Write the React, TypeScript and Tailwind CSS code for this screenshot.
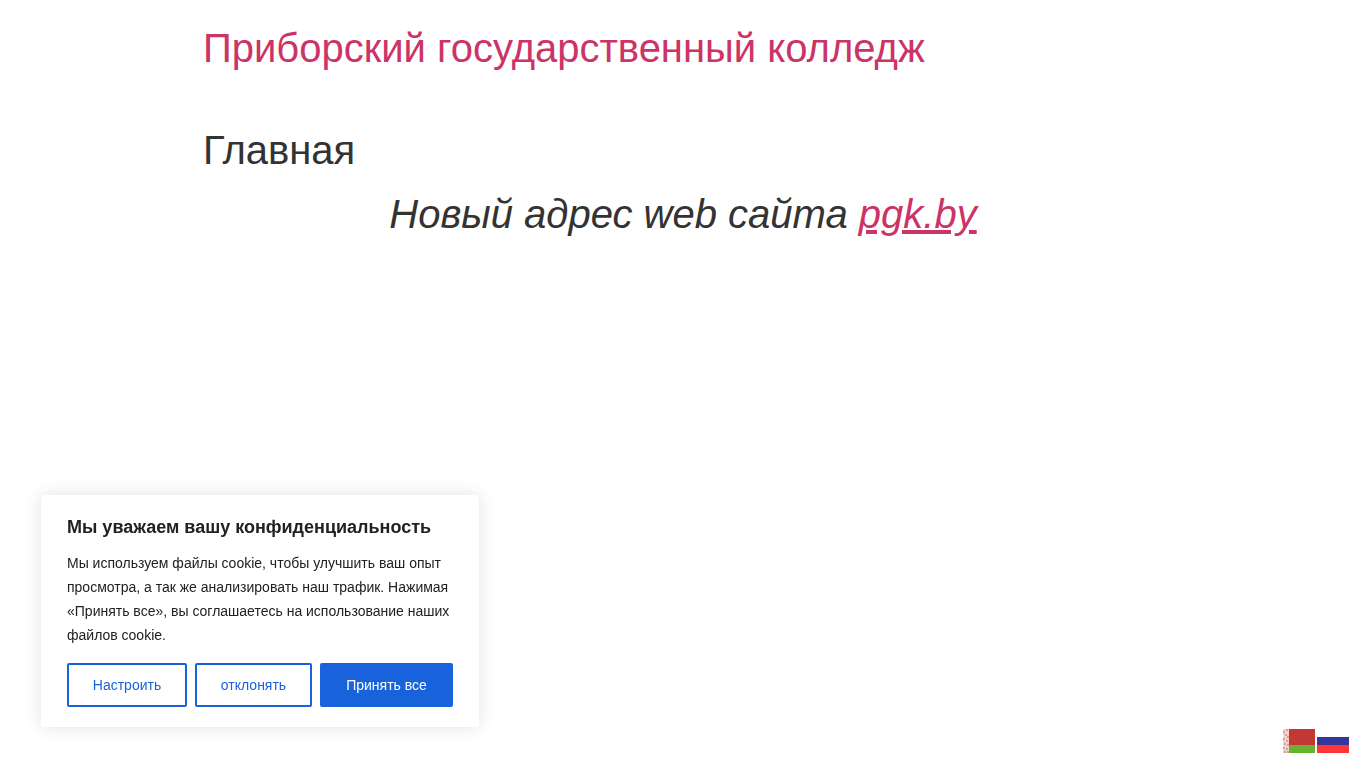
export default function App() {
  return (
    <div className="min-h-[768px] bg-white font-['Liberation_Sans',Arial,sans-serif] text-[#333]">
      <main className="mx-auto w-[960px]">
        <h1 className="pt-[26px] text-[40px] leading-[44px] font-normal text-[#cc3366]">Приборский государственный колледж</h1>
        <h2 className="mt-[58px] text-[40px] leading-[44px] font-normal text-[#333]">Главная</h2>
        <p className="mt-[20px] text-center text-[40px] leading-[44px] italic">
          Новый адрес web сайта <a href="#" className="text-[#cc3366] underline">pgk.by</a>
        </p>
      </main>

      <section className="fixed bottom-[41px] left-[41px] w-[438px] rounded-[4px] bg-white px-[26px] pt-[20px] pb-[20px] shadow-[0_0_18px_rgba(0,0,0,0.12)]">
        <h3 className="text-[18px] leading-[24px] font-bold text-[#212121]">Мы уважаем вашу конфиденциальность</h3>
        <p className="mt-[12px] text-[14px] leading-[24px] text-[#212121]">
          Мы используем файлы cookie, чтобы улучшить ваш опыт просмотра, а так же анализировать наш трафик. Нажимая «Принять все», вы соглашаетесь на использование наших файлов cookie.
        </p>
        <div className="mt-[16px] flex gap-[8px]">
          <button className="h-[44px] w-[120px] rounded-[2px] border-2 border-[#1863dc] bg-white text-[14px] text-[#1863dc]">Настроить</button>
          <button className="h-[44px] w-[117px] rounded-[2px] border-2 border-[#1863dc] bg-white text-[14px] text-[#1863dc]">отклонять</button>
          <button className="h-[44px] w-[133px] rounded-[2px] border-2 border-[#1863dc] bg-[#1863dc] text-[14px] text-white">Принять все</button>
        </div>
      </section>

      <div className="fixed right-[17px] bottom-[15px] flex gap-[2px]">
        <svg width="32" height="24" viewBox="0 0 32 24" aria-label="Беларусь">
          <rect width="32" height="16" fill="#c33734" />
          <rect y="16" width="32" height="8" fill="#67b32f" />
          <rect width="6" height="24" fill="#f5d3d1" />
          <path d="M0 2h2v2H0zM3 0h2v2H3zM2 5h2v2H2zM4 7h2v2H4zM0 9h2v2H0zM3 11h2v2H3zM1 14h2v2H1zM4 15h2v2H4zM0 18h2v2H0zM3 19h2v2H3zM1 22h2v2H1zM4 22h2v2H4z" fill="#e59a97" />
        </svg>
        <svg width="32" height="24" viewBox="0 0 32 24" aria-label="Россия">
          <rect width="32" height="8" fill="#ffffff" />
          <rect y="8" width="32" height="8" fill="#35359b" />
          <rect y="16" width="32" height="8" fill="#ff3636" />
        </svg>
      </div>
    </div>
  );
}
